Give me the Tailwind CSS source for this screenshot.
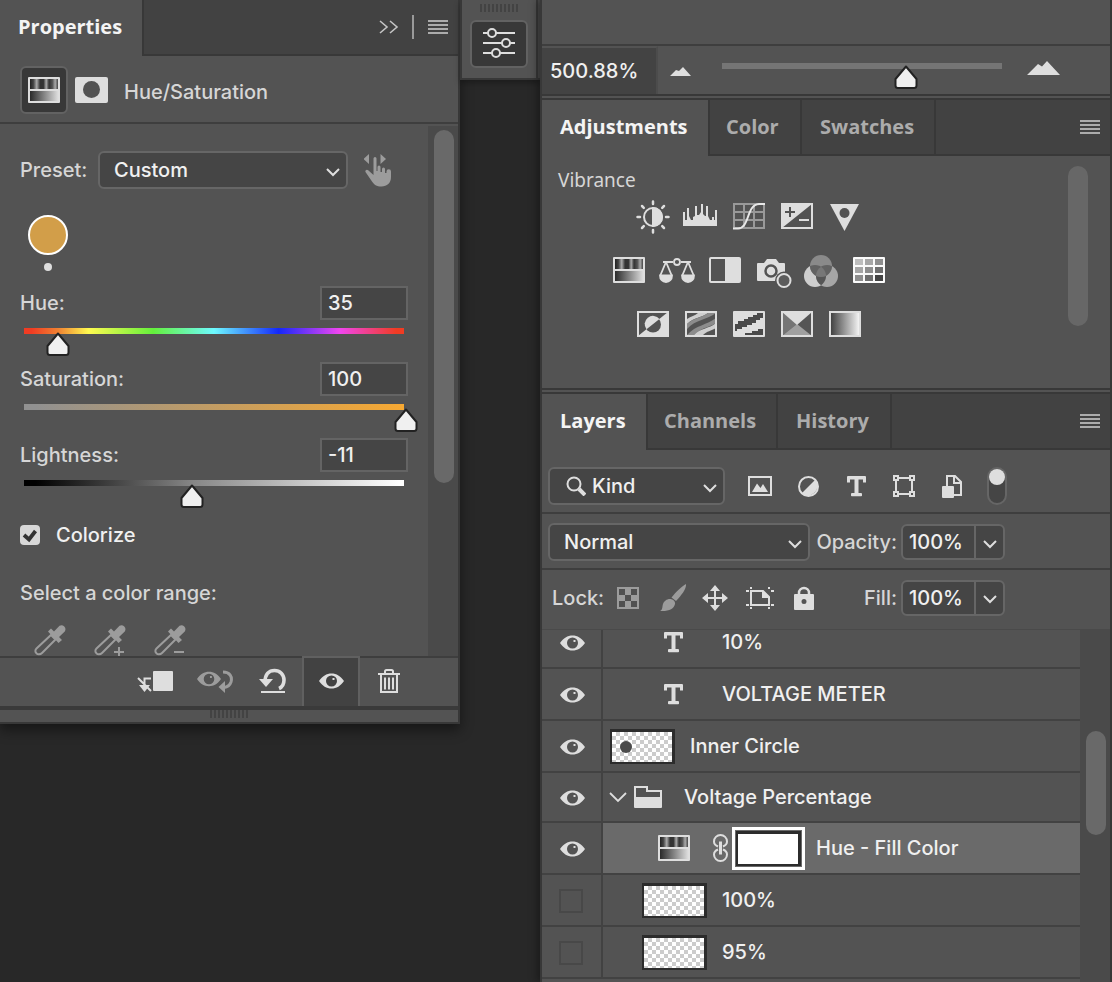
<!DOCTYPE html>
<html lang="en">
<head>
<meta charset="utf-8">
<meta name="viewport" content="width=device-width, initial-scale=1">
<title>Hue/Saturation properties</title>
<script src="https://cdn.jsdelivr.net/npm/@tailwindcss/browser@4"></script>
</head>
<body class="bg-[#282828] font-['Inter',sans-serif] text-xl leading-6 font-[450] text-[#d6d6d6]">

<!-- Shared icons -->
<svg class="absolute h-0 w-0" aria-hidden="true">
  <defs>
    <linearGradient id="bands">
      <stop offset="0" stop-color="#222"/><stop offset=".12" stop-color="#444"/><stop offset=".24" stop-color="#aaa"/><stop offset=".36" stop-color="#333"/><stop offset=".48" stop-color="#333"/><stop offset=".58" stop-color="#aaa"/><stop offset=".68" stop-color="#333"/><stop offset=".8" stop-color="#555"/><stop offset=".9" stop-color="#aaa"/><stop offset="1" stop-color="#444"/>
    </linearGradient>
    <linearGradient id="ramp"><stop offset="0" stop-color="#2b2b2b"/><stop offset="1" stop-color="#dcdcdc"/></linearGradient>
    <linearGradient id="mapRamp"><stop offset="0" stop-color="#3c3c3c"/><stop offset=".85" stop-color="#dcdcdc"/><stop offset="1" stop-color="#fafafa"/></linearGradient>
    <clipPath id="mixTop"><circle cx="20" cy="14" r="11"/></clipPath>
    <clipPath id="mixLeft"><circle cx="14" cy="24" r="11"/></clipPath>
  </defs>
  <symbol id="huesat" viewBox="0 0 32 26">
    <rect width="32" height="26" rx="1" fill="#dedede"/>
    <rect x="2" y="2" width="28" height="10" fill="url(#bands)"/>
    <rect x="2" y="14" width="28" height="10" fill="url(#ramp)"/>
  </symbol>
  <symbol id="eye" viewBox="0 0 25 16">
    <path fill="currentColor" fill-rule="evenodd" d="M0 8C3.500 3 7.500.5 12.500.5S21.500 3 25 8c-3.500 5-7.500 7.500-12.500 7.500S3.500 13 0 8zM12.500 2.500a5.500 5.500 0 1 0 0 11 5.500 5.500 0 0 0 0-11zM13.500 5h2v2h-2z"/>
  </symbol>
  <symbol id="chevron" viewBox="0 0 14 9"><path d="M1 1l6 6 6-6" fill="none" stroke="#dedede" stroke-width="2"/></symbol>
  <symbol id="menu" viewBox="0 0 20 14"><path d="M0 1h20M0 5h20M0 9h20M0 13h20" stroke="#acacac" stroke-width="2"/></symbol>
  <symbol id="thumb" viewBox="0 0 24 24"><path d="M12 1.500L22.500 14v6.500a2.500 2.500 0 0 1-2.500 2.500H4a2.500 2.500 0 0 1-2.500-2.500V14z" fill="#f0f0f0" stroke="#222" stroke-width="2" stroke-linejoin="round"/></symbol>
  <symbol id="type" viewBox="0 0 19 21"><path d="M1 0h17a1 1 0 0 1 1 1v5.500h-3V3.500h-4.500V17H14a1 1 0 0 1 1 1v1.500a.8.8 0 0 1-.8.8H4.800A.8.8 0 0 1 4 19.500V18a1 1 0 0 1 1-1h2.500V3.500H3v3H0V1a1 1 0 0 1 1-1z" fill="#dedede"/></symbol>
  <symbol id="dropper" viewBox="0 0 32 32">
    <path d="M17 11l4.500 4.500L8 29c-2 2-4.500 1.500-5.500.3C1 28 1 26 2.500 24.500z" fill="none" stroke="#9c9c9c" stroke-width="2"/>
    <path d="M14 7.500L17 4.500l3 3 5.500-5.700a4 4 0 0 1 5.300 5.600L25 13l3 3-3.500 3z" fill="#9c9c9c"/>
  </symbol>
  <symbol id="grip" viewBox="0 0 38 8"><path d="M0 4h38" stroke="#434343" stroke-width="8" stroke-dasharray="2 2"/></symbol>
</svg>

<div class="flex min-h-screen items-start">

  <!-- Properties panel -->
  <section class="w-[460px] shrink-0 border-r-2 border-b-2 border-[#383838] bg-[#535353] shadow-[0_6px_12px_rgba(0,0,0,0.45)]" aria-label="Properties">
    <header class="flex h-14">
      <h1 class="w-[142px] shrink-0 pt-[15px] pl-[18px] font-['Open_Sans',sans-serif] text-xl leading-6 font-bold text-[#f4f4f4]">Properties</h1>
      <div class="flex flex-1 items-center justify-end border-b-2 border-l-2 border-[#383838] bg-[#424242] pr-[10px]">
        <button type="button" aria-label="Collapse"><svg class="h-4 w-5" viewBox="0 0 20 16" fill="none" stroke="#c4c4c4" stroke-width="1.600"><path d="M1 2l7 6-7 6M11 2l7 6-7 6"/></svg></button>
        <span class="mr-[14px] ml-[13px] h-6 w-[2px] bg-[#9a9a9a]"></span>
        <button type="button" aria-label="Panel menu"><svg class="h-[14px] w-5"><use href="#menu"/></svg></button>
      </div>
    </header>

    <div class="flex h-[68px] items-center border-b-2 border-[#3e3e3e] pt-[2px] pl-5">
      <button type="button" aria-label="Adjustment" class="grid h-12 w-12 place-items-center rounded-md border-2 border-[#626262] bg-[#383838]"><svg class="h-[26px] w-8"><use href="#huesat"/></svg></button>
      <button type="button" aria-label="Mask" class="ml-[7px]"><svg class="h-[26px] w-[33px]" viewBox="0 0 33 26"><rect width="33" height="26" rx="2" fill="#dedede"/><circle cx="16.500" cy="12.500" r="8.500" fill="#535353"/></svg></button>
      <h2 class="pt-1 pl-4">Hue/Saturation</h2>
    </div>

    <div class="flex h-[532px] overflow-hidden">
      <form class="flex-1 pt-[27px] pr-5 pl-5">
        <div class="flex h-[38px] items-center">
          <label for="preset" class="w-[78px]">Preset:</label>
          <div class="relative w-[250px]">
            <select id="preset" class="block h-[38px] w-full appearance-none rounded-md border-2 border-[#666] bg-[#454545] pl-[14px] text-[#f0f0f0]"><option>Custom</option></select>
            <svg class="pointer-events-none absolute top-[17px] right-2 h-[9px] w-[14px]"><use href="#chevron"/></svg>
          </div>
          <button type="button" aria-label="On-image adjustment" class="ml-4"><svg class="h-[34px] w-7" viewBox="0 0 28 34" fill="#9c9c9c"><path d="M5 1v10L-.5 6zM16.500 1v10L22 6z"/><path d="M9.500 5.500a1.500 1.500 0 0 1 3 0V18h1v-4a1.400 1.400 0 0 1 3 0v5h1.500v-3a1.400 1.400 0 0 1 3 0v4h1.500v-1.500a1.500 1.500 0 0 1 4.500 0V24c0 6-4 9.500-9.500 9.500-5 0-7.500-2-9.500-5L1.500 19c-.8-2 1.500-3 2.700-1.800L9.500 22z"/></svg></button>
        </div>

        <div class="mt-[26px] ml-2 flex w-10 flex-col items-center gap-2">
          <button type="button" aria-label="Colorize color" class="h-10 w-10 rounded-full border-2 border-white bg-[#d29e49]"></button>
          <span class="h-2 w-2 rounded-full bg-[#dedede]"></span>
        </div>

        <div class="mt-[15px] flex flex-col gap-[6px]">
          <div>
            <div class="flex h-[34px] items-center justify-between"><label for="hue">Hue:</label><input id="hue" type="text" value="35" class="h-[34px] w-22 border-2 border-[#646464] bg-[#454545] px-[6px] text-[#f0f0f0]"></div>
            <div class="relative mx-1 h-9 pt-2">
              <div class="h-[6px] bg-[linear-gradient(90deg,#f03c23_2%,#f08232_9%,#fffa50_17%,#64f03c_34%,#6efaff_50%,#1428fa_67%,#f046f0_83%,#f03c23_98%)]"></div>
              <svg class="absolute top-3 h-6 w-6 -translate-x-1/2" style="left:8.900%"><use href="#thumb"/></svg>
              <input type="range" aria-label="Hue" min="0" max="360" value="35" class="absolute inset-0 h-full w-full opacity-0">
            </div>
          </div>
          <div>
            <div class="flex h-[34px] items-center justify-between"><label for="sat">Saturation:</label><input id="sat" type="text" value="100" class="h-[34px] w-22 border-2 border-[#646464] bg-[#454545] px-[6px] text-[#f0f0f0]"></div>
            <div class="relative mx-1 h-9 pt-2">
              <div class="h-[6px] bg-[linear-gradient(90deg,#919191_3%,#f8a932)]"></div>
              <svg class="absolute top-3 h-6 w-6 -translate-x-1/2" style="left:100.500%"><use href="#thumb"/></svg>
              <input type="range" aria-label="Saturation" min="0" max="100" value="100" class="absolute inset-0 h-full w-full opacity-0">
            </div>
          </div>
          <div>
            <div class="flex h-[34px] items-center justify-between"><label for="light">Lightness:</label><input id="light" type="text" value="-11" class="h-[34px] w-22 border-2 border-[#646464] bg-[#454545] px-[6px] text-[#f0f0f0]"></div>
            <div class="relative mx-1 h-9 pt-2">
              <div class="h-[6px] bg-[linear-gradient(90deg,#000_3%,#888_45%,#fff_99%)]"></div>
              <svg class="absolute top-3 h-6 w-6 -translate-x-1/2" style="left:44.200%"><use href="#thumb"/></svg>
              <input type="range" aria-label="Lightness" min="-100" max="100" value="-11" class="absolute inset-0 h-full w-full opacity-0">
            </div>
          </div>
        </div>

        <label class="mt-[15px] flex items-center gap-4 text-[#f0f0f0]">
          <span class="relative h-5 w-5">
            <input type="checkbox" checked class="block h-5 w-5 appearance-none rounded bg-[#d8d8d8]">
            <svg class="pointer-events-none absolute inset-0 h-5 w-5" viewBox="0 0 20 20" fill="none" stroke="#333" stroke-width="3.800"><path d="M4 10l5 4.500L15.500 6"/></svg>
          </span>
          Colorize
        </label>

        <p class="mt-[34px]">Select a color range:</p>
        <div class="mt-[19px] ml-[14px] flex gap-7">
          <button type="button" aria-label="Eyedropper"><svg class="h-8 w-8"><use href="#dropper"/></svg></button>
          <button type="button" aria-label="Add to sample"><svg class="h-8 w-8" viewBox="0 0 32 32"><use href="#dropper" width="32" height="32"/><path d="M20 28h10M25 23v10" stroke="#9c9c9c" stroke-width="2"/></svg></button>
          <button type="button" aria-label="Subtract from sample"><svg class="h-8 w-8" viewBox="0 0 32 32"><use href="#dropper" width="32" height="32"/><path d="M20 28h10" stroke="#9c9c9c" stroke-width="2"/></svg></button>
        </div>
      </form>
      <div class="mt-[2px] w-[30px] bg-[#4a4a4a] px-[4px] pt-1"><div class="ml-[2px] h-[353px] w-5 rounded-full bg-[#696969]"></div></div>
    </div>

    <footer class="flex h-[50px] justify-end border-t-2 border-[#3e3e3e] pr-10">
      <button type="button" aria-label="Clip to layer" class="grid w-[58px] place-items-center pr-1 pb-[2px]"><svg class="h-6 w-9" viewBox="0 0 36 24"><rect x="16" y="2" width="20" height="20" rx="1" fill="#dedede"/><path d="M14 9.500H7.500V18M1 9l13 13" fill="none" stroke="#dedede" stroke-width="2"/><path d="M2 16h11l-5.500 7z" fill="#dedede"/></svg></button>
      <button type="button" aria-label="View previous state" class="grid w-[58px] place-items-center text-[#9c9c9c]"><svg class="h-6 w-9" viewBox="0 0 36 24"><use href="#eye" width="24" height="16" y="1"/><path d="M26 2c7 0 9.500 5 8 10-1 3-3.500 5-7 5.500" fill="none" stroke="#9c9c9c" stroke-width="3"/><path d="M28 11v12l-6.500-6z" fill="#9c9c9c"/></svg></button>
      <button type="button" aria-label="Reset" class="grid w-[58px] place-items-center pb-[2px]"><svg class="h-[26px] w-7" viewBox="0 0 28 26"><path d="M6 14C6 6 10 2.500 15.500 2.500S25 6.500 25 12c0 4-1.500 7-5 8.500" fill="none" stroke="#dedede" stroke-width="3.600"/><path d="M0 11h14l-7 8z" fill="#dedede"/><path d="M2 24h24" stroke="#dedede" stroke-width="2"/></svg></button>
      <button type="button" aria-label="Toggle visibility" class="-mt-[2px] grid w-[58px] place-items-center border-x-2 border-t-2 border-[#606060] bg-[#424242] pb-[2px] text-[#dedede]"><svg class="h-4 w-[25px]"><use href="#eye"/></svg></button>
      <button type="button" aria-label="Delete" class="grid w-[58px] place-items-center pb-[2px]"><svg class="h-[26px] w-[22px]" viewBox="0 0 22 26" fill="none" stroke="#dedede" stroke-width="2"><path d="M0 6h22M3 6v18h16V6M7 5V3.500C7 2.500 7.500 2 8.500 2h5c1 0 1.500.5 1.500 1.500V5M7 9.500v12M11 9.500v12M15 9.500v12"/></svg></button>
    </footer>
    <div class="flex h-4 justify-center border-t-4 border-[#3a3a3a]"><svg class="h-2 w-[38px]"><use href="#grip"/></svg></div>
  </section>

  <!-- Collapsed dock -->
  <aside class="w-20 shrink-0">
    <div class="flex h-20 border-b-2 border-[#383838] shadow-[0_3px_6px_rgba(0,0,0,0.3)]">
      <div class="flex flex-1 flex-col items-center border-r-2 border-l-2 border-[#383838] bg-[#535353] pt-1">
        <svg class="h-2 w-[38px]"><use href="#grip"/></svg>
        <button type="button" aria-label="Properties" class="mt-2 grid h-12 w-[58px] place-items-center rounded-md border-2 border-[#626262] bg-[#383838] pb-[2px]"><svg class="h-[30px] w-8" viewBox="0 0 32 30" fill="#383838" stroke="#dedede" stroke-width="2"><path d="M0 5h32M0 15h32M0 25h32"/><circle cx="9" cy="5" r="4"/><circle cx="23" cy="15" r="4"/><circle cx="13" cy="25" r="4"/></svg></button>
      </div>
      <div class="w-[2px] bg-[#4a4a4a]"></div>
    </div>
  </aside>

  <!-- Right column -->
  <main class="flex h-screen min-w-0 flex-1 flex-col overflow-hidden border-x-2 border-[#383838] bg-[#535353] shadow-[-3px_0_8px_rgba(0,0,0,0.35)]">

    <section aria-label="Navigator" class="shrink-0 border-b-2 border-[#383838]">
      <div class="h-[46px] border-b-2 border-[#3e3e3e]"></div>
      <div class="flex h-12">
        <input type="text" aria-label="Zoom" value="500.88%" class="w-[116px] border-t-2 border-r-2 border-t-[#535353] border-r-[#4c4c4c] bg-[#434343] pl-2 text-[#f0f0f0]">
        <div class="flex flex-1 pt-[15px]">
          <svg class="mt-[6px] ml-3 h-[9px] w-[21px]" viewBox="0 0 21 9"><path d="M0 9L6 3l3 1 4-4 8 9z" fill="#dedede"/></svg>
          <div class="relative ml-[31px] h-7 w-[280px] pt-[2px]">
            <div class="h-[6px] bg-[#757575]"></div>
            <svg class="absolute top-1 h-6 w-6 -translate-x-1/2" style="left:65.700%"><use href="#thumb"/></svg>
            <input type="range" aria-label="Zoom level" min="0" max="100" value="66" class="absolute inset-0 h-full w-full opacity-0">
          </div>
          <svg class="ml-[25px] h-[14px] w-[33px]" viewBox="0 0 33 14"><path d="M0 14L11 3l4 2.500L20 0l13 14z" fill="#dedede"/></svg>
        </div>
      </div>
    </section>

    <section aria-label="Adjustments" class="mt-[2px] shrink-0 border-y-2 border-[#383838]">
      <div role="tablist" class="flex h-14 font-['Open_Sans',sans-serif] font-bold text-[#acacac]">
        <button type="button" role="tab" aria-selected="true" class="w-[166px] pb-[2px] pl-[18px] text-left text-[#f4f4f4]">Adjustments</button>
        <button type="button" role="tab" class="w-[92px] border-b-2 border-l-2 border-[#383838] bg-[#424242] pl-4 text-left">Color</button>
        <button type="button" role="tab" class="w-[134px] border-b-2 border-l-2 border-[#383838] bg-[#424242] pl-[18px] text-left">Swatches</button>
        <div class="flex flex-1 items-center justify-end border-b-2 border-l-2 border-[#383838] bg-[#424242] pr-[10px]"><button type="button" aria-label="Panel menu"><svg class="h-[14px] w-5"><use href="#menu"/></svg></button></div>
      </div>
      <div class="flex h-[232px] justify-between pr-[22px]">
        <div>
          <h2 class="mt-3 ml-4 font-['Noto_Sans',sans-serif] text-[19px] leading-6">Vibrance</h2>
          <div class="mt-[6px] ml-[67px] flex w-fit flex-col items-center gap-[18px]">
            <div class="flex gap-2">
              <button type="button" aria-label="Brightness/Contrast"><svg class="block h-9 w-10" viewBox="0 0 40 36" fill="none" stroke="#dedede" stroke-width="2"><circle cx="20" cy="19" r="9"/><path d="M20 10a9 9 0 0 1 0 18z" fill="#dedede"/><path stroke-width="2.500" stroke-linecap="round" d="M20 3.500v2.500M20 32v2.500M4.500 19H7M33 19h2.500M9 8l1.800 1.800M29.200 28.200L31 30M31 8l-1.800 1.800M9 30l1.800-1.800"/></svg></button>
              <button type="button" aria-label="Levels"><svg class="block h-9 w-10" viewBox="0 0 40 36" fill="#dedede"><path d="M2 28V14h2v8h2V10h2v8l2 4h2v-3l2-1V8h2v9h2l2-3V6h2v10l2 2h1V8h2v10l2 4h2v-3h2v3h1V12h2v16z"/></svg></button>
              <button type="button" aria-label="Curves"><svg class="block h-9 w-10" viewBox="0 0 40 36" fill="none"><path d="M5 6h30v24H5zM15 6v24M25 6v24M5 14h30M5 22h30" stroke="#999" stroke-width="2"/><path d="M4 30.500h5C21 30 17 7 30 6h6" stroke="#e8e8e8" stroke-width="2"/></svg></button>
              <button type="button" aria-label="Exposure"><svg class="block h-9 w-10" viewBox="0 0 40 36"><rect x="5" y="6" width="30" height="24" fill="none" stroke="#dedede" stroke-width="2"/><path d="M5 6h30L5 30z" fill="#dedede"/><path d="M8 14h10M13 9v10" stroke="#535353" stroke-width="2"/><path d="M22 22h10" stroke="#dedede" stroke-width="2"/></svg></button>
              <button type="button" aria-label="Vibrance"><svg class="block h-9 w-10" viewBox="0 0 40 36"><path d="M5 6h29L19.500 33z" fill="#dedede"/><circle cx="19.500" cy="15" r="5" fill="#535353"/></svg></button>
            </div>
            <div class="flex gap-2">
              <button type="button" aria-label="Hue/Saturation"><svg class="block h-9 w-10" viewBox="0 0 40 36"><use href="#huesat" x="4" y="5" width="32" height="26"/></svg></button>
              <button type="button" aria-label="Color Balance"><svg class="block h-9 w-10" viewBox="0 0 40 36" fill="none" stroke="#dedede" stroke-width="1.800"><path d="M6 10h10M24 10h10M9 10L3.500 23M9 10l5.500 13M31 10l-5.500 13M31 10l5.500 13"/><circle cx="20" cy="10" r="3"/><path d="M3 23.500h12c0 4-2.500 6.500-6 6.500s-6-2.500-6-6.500zM25 23.500h12c0 4-2.500 6.500-6 6.500s-6-2.500-6-6.500z" fill="#dedede"/></svg></button>
              <button type="button" aria-label="Black &amp; White"><svg class="block h-9 w-10" viewBox="0 0 40 36"><rect x="5" y="6" width="30" height="24" rx="1" fill="none" stroke="#dedede" stroke-width="2"/><path d="M20 6h15v24H20z" fill="#dedede"/></svg></button>
              <button type="button" aria-label="Photo Filter"><svg class="block h-9 w-10" viewBox="0 0 40 36"><path d="M5 11h6l3-4h9l3 4h5a1 1 0 0 1 1 1v16a1 1 0 0 1-1 1H5a1 1 0 0 1-1-1V12a1 1 0 0 1 1-1z" fill="#dedede"/><circle cx="18" cy="19" r="5.500" fill="#dedede" stroke="#535353" stroke-width="2.500"/><circle cx="31" cy="28.500" r="9" fill="#535353"/><circle cx="31" cy="28.500" r="6.500" fill="#5c5c5c" stroke="#dedede" stroke-width="2"/></svg></button>
              <button type="button" aria-label="Channel Mixer"><svg class="block h-9 w-10" viewBox="0 0 40 36"><circle cx="14" cy="24" r="11" fill="#cecece"/><circle cx="26" cy="24" r="11" fill="#a6a6a6"/><circle cx="20" cy="14" r="11" fill="#8a8a8a"/><g clip-path="url(#mixLeft)"><circle cx="26" cy="24" r="11" fill="#555"/><circle cx="20" cy="14" r="11" fill="#626262"/></g><g clip-path="url(#mixTop)"><circle cx="26" cy="24" r="11" fill="#626262"/><g clip-path="url(#mixLeft)"><circle cx="26" cy="24" r="11" fill="#777"/></g></g></svg></button>
              <button type="button" aria-label="Color Lookup"><svg class="block h-9 w-10" viewBox="0 0 40 36"><rect x="4" y="5" width="32" height="26" rx="1" fill="#fafafa"/><path d="M6 7h8v6H6z" fill="#bdbdbd"/><path d="M16 7h8v6h-8zM6 15h8v6H6z" fill="#a6a6a6"/><path d="M26 7h8v6h-8zM16 15h8v6h-8zM6 23h8v6H6z" fill="#8e8e8e"/><path d="M26 15h8v6h-8zM16 23h8v6h-8z" fill="#6e6e6e"/><path d="M26 23h8v6h-8z" fill="#444"/></svg></button>
            </div>
            <div class="flex gap-2">
              <button type="button" aria-label="Invert"><svg class="block h-9 w-10" viewBox="0 0 40 36"><rect x="5" y="6" width="30" height="24" fill="none" stroke="#dedede" stroke-width="2"/><path d="M35 6v24H5z" fill="#dedede"/><circle cx="20" cy="18.500" r="8" fill="#535353"/><path d="M13.500 23.300A8 8 0 0 1 26.500 13z" fill="#dedede"/></svg></button>
              <button type="button" aria-label="Posterize"><svg class="block h-9 w-10" viewBox="0 0 40 36"><rect x="5" y="6" width="30" height="24" fill="#535353"/><path d="M17 7h10c-6 5-14 4-21 11v-5c4-3 8-3 11-6z" fill="#cfcfcf"/><path d="M27 7h8C26 14 15 13 6 23v-5C14 11 21 12 27 7z" fill="#8c8c8c"/><path d="M35 12v5C27 22 19 22 13 29H6c9-10 20-10 29-17z" fill="#8c8c8c"/><path d="M35 17v5c-5 3-9 3-13 7h-9c6-7 15-6 22-12z" fill="#cfcfcf"/><rect x="5" y="6" width="30" height="24" fill="none" stroke="#dedede" stroke-width="2"/></svg></button>
              <button type="button" aria-label="Threshold"><svg class="block h-9 w-10" viewBox="0 0 40 36"><rect x="4" y="5" width="32" height="26" rx="1" fill="#dedede"/><path d="M34 7h-6v2h-4v2h-5v2h-4v2H9v3H6v7h2v-2h5v-2h5v-2h5v-2h4v-3h4v-2h3zM34 23h-5v2h-6v2h-7v2h18z" fill="#4a4a4a"/></svg></button>
              <button type="button" aria-label="Selective Color"><svg class="block h-9 w-10" viewBox="0 0 40 36"><rect x="5" y="6" width="30" height="24" fill="#555"/><path d="M5 6l15 12L5 30z" fill="#757575"/><path d="M5 30l15-12 15 12z" fill="#a0a0a0"/><path d="M5 6h30L20 19z" fill="#dedede"/><rect x="5" y="6" width="30" height="24" fill="none" stroke="#dedede" stroke-width="2"/></svg></button>
              <button type="button" aria-label="Gradient Map"><svg class="block h-9 w-10" viewBox="0 0 40 36"><rect x="5" y="6" width="30" height="24" fill="url(#mapRamp)" stroke="#dedede" stroke-width="2"/></svg></button>
            </div>
          </div>
        </div>
        <div class="mt-[10px] h-40 w-5 rounded-full bg-[#676767]"></div>
      </div>
    </section>

    <section aria-label="Layers" class="mt-[2px] flex min-h-0 flex-1 flex-col border-t-2 border-[#383838]">
      <div role="tablist" class="flex h-14 shrink-0 font-['Open_Sans',sans-serif] font-bold text-[#acacac]">
        <button type="button" role="tab" aria-selected="true" class="w-[104px] pb-[2px] pl-[18px] text-left text-[#f4f4f4]">Layers</button>
        <button type="button" role="tab" class="w-[130px] border-b-2 border-l-2 border-[#383838] bg-[#424242] pl-4 text-left">Channels</button>
        <button type="button" role="tab" class="w-[114px] border-b-2 border-l-2 border-[#383838] bg-[#424242] pl-[18px] text-left">History</button>
        <div class="flex flex-1 items-center justify-end border-b-2 border-l-2 border-[#383838] bg-[#424242] pr-[10px]"><button type="button" aria-label="Panel menu"><svg class="h-[14px] w-5"><use href="#menu"/></svg></button></div>
      </div>

      <div class="flex h-16 shrink-0 items-center border-b-2 border-[#3e3e3e] pt-[10px] pl-[6px]">
        <div class="relative w-[177px]">
          <svg class="pointer-events-none absolute top-[9px] left-[18px] h-5 w-5" viewBox="0 0 20 20" fill="none" stroke="#dedede"><circle cx="8" cy="8" r="6.500" stroke-width="2"/><path d="M13 13l6 6" stroke-width="4"/></svg>
          <select aria-label="Filter type" class="block h-[38px] w-full appearance-none rounded-md border-2 border-[#666] bg-[#454545] pl-[42px] text-[#f0f0f0]"><option>Kind</option></select>
          <svg class="pointer-events-none absolute top-[17px] right-2 h-[9px] w-[14px]"><use href="#chevron"/></svg>
        </div>
        <div class="ml-[11px] flex">
          <button type="button" aria-label="Pixel layers" class="grid w-12 place-items-center"><svg class="h-5 w-6" viewBox="0 0 24 20"><rect x="1" y="1" width="22" height="18" fill="none" stroke="#dedede" stroke-width="2"/><path d="M4 16l5-8.500 3.500 4.500L15 8l5 8z" fill="#dedede"/></svg></button>
          <button type="button" aria-label="Adjustment layers" class="grid w-12 place-items-center"><svg class="h-[21px] w-[21px]" viewBox="0 0 21 21"><circle cx="10.500" cy="10.500" r="9.500" fill="none" stroke="#dedede" stroke-width="2"/><path d="M17.500 3.500a10 10 0 0 1-14 14z" fill="#dedede"/></svg></button>
          <button type="button" aria-label="Type layers" class="grid w-12 place-items-center"><svg class="h-[21px] w-[19px]"><use href="#type"/></svg></button>
          <button type="button" aria-label="Shape layers" class="grid w-12 place-items-center"><svg class="h-[22px] w-[22px]" viewBox="0 0 22 22" fill="none" stroke="#dedede" stroke-width="2"><path d="M3 6v10M19 6v10M6 3h10M6 19h10"/><path d="M1 1h4v4H1zM17 1h4v4h-4zM1 17h4v4H1zM17 17h4v4h-4z"/></svg></button>
          <button type="button" aria-label="Smart objects" class="grid w-12 place-items-center"><svg class="h-[23px] w-5" viewBox="0 0 20 23"><path d="M5 11V1h8l6 6v13h-8M12 1v7h7" fill="none" stroke="#dedede" stroke-width="2"/><rect y="11" width="12" height="12" rx="1" fill="#dedede"/></svg></button>
        </div>
        <button type="button" aria-label="Toggle filtering" class="ml-[11px] flex h-[38px] w-5 items-start rounded-full border-2 border-[#666] bg-[#454545]"><span class="block h-4 w-4 rounded-full bg-[#dedede]"></span></button>
      </div>

      <div class="flex h-14 shrink-0 items-center border-b-2 border-[#3e3e3e] pt-[2px] pl-[6px]">
        <div class="relative w-[262px]">
          <select aria-label="Blend mode" class="block h-[38px] w-full appearance-none rounded-md border-2 border-[#666] bg-[#454545] pl-[14px] text-[#f0f0f0]"><option>Normal</option></select>
          <svg class="pointer-events-none absolute top-[17px] right-2 h-[9px] w-[14px]"><use href="#chevron"/></svg>
        </div>
        <label for="opacity" class="w-[91px] pr-1 text-right">Opacity:</label>
        <div class="flex h-9 w-[104px] rounded-md border-2 border-[#666] bg-[#454545]">
          <input id="opacity" type="text" value="100%" class="w-[73px] border-r-2 border-[#666] pl-[6px] text-[#f0f0f0]">
          <button type="button" aria-label="Opacity slider" class="grid flex-1 place-items-center pt-1"><svg class="h-[9px] w-[14px]"><use href="#chevron"/></svg></button>
        </div>
      </div>

      <div class="flex h-15 shrink-0 items-center border-b border-[#4a4a4a] pb-1 pl-[10px]">
        <span class="w-[65px]">Lock:</span>
        <div class="flex items-center">
          <button type="button" aria-label="Lock transparent pixels"><svg class="h-[22px] w-[22px]" viewBox="0 0 22 22"><rect width="22" height="22" fill="#9c9c9c"/><path d="M2 2h6v6H2zM14 2h6v6h-6zM8 8h6v6H8zM2 14h6v6H2zM14 14h6v6h-6z" fill="#505050"/></svg></button>
          <button type="button" aria-label="Lock image pixels" class="ml-[21px]"><svg class="h-7 w-[26px]" viewBox="0 0 26 28" fill="#9c9c9c"><path d="M26 0c.5 4-3 10-10 17l-4.500-3.500C16 8 22 2 26 0zM10.500 15c3 .5 5 2.500 4.500 5-1 5-6 7.500-15 7 3-1.500 2-4 3-7s4-5.300 7.500-5z"/></svg></button>
          <button type="button" aria-label="Lock position" class="ml-4"><svg class="h-[26px] w-[26px]" viewBox="0 0 26 26"><path d="M13 4v18M4 13h18" stroke="#dedede" stroke-width="2"/><path d="M13 0l5 6H8zM13 26l5-6H8zM0 13l6-5v10zM26 13l-6-5v10z" fill="#dedede"/></svg></button>
          <button type="button" aria-label="Lock artboard nesting" class="ml-[18px]"><svg class="h-6 w-7" viewBox="0 0 28 24" fill="none" stroke="#dedede" stroke-width="2"><path d="M5 5h12l6 6v8H5zM0 5h3M25 5h3M0 19h3M25 19h3M5 1v2M23 1v2M5 21v2M23 21v2"/><path d="M16 4l8 8h-8z" fill="#dedede" stroke="none"/></svg></button>
          <button type="button" aria-label="Lock all" class="ml-5"><svg class="h-6 w-5" viewBox="0 0 20 24"><path d="M5 10V7a5 5 0 0 1 10 0v3" fill="none" stroke="#dedede" stroke-width="2.500"/><path fill-rule="evenodd" d="M1 8h18a1 1 0 0 1 1 1v14a1 1 0 0 1-1 1H1a1 1 0 0 1-1-1V9a1 1 0 0 1 1-1zm9 5a2.500 2.500 0 1 0 0 5 2.500 2.500 0 0 0 0-5z" fill="#dedede"/></svg></button>
        </div>
        <label for="fill" class="w-[87px] pr-1 text-right">Fill:</label>
        <div class="flex h-9 w-[104px] rounded-md border-2 border-[#666] bg-[#454545]">
          <input id="fill" type="text" value="100%" class="w-[73px] border-r-2 border-[#666] pl-[6px] text-[#f0f0f0]">
          <button type="button" aria-label="Fill slider" class="grid flex-1 place-items-center pt-1"><svg class="h-[9px] w-[14px]"><use href="#chevron"/></svg></button>
        </div>
      </div>

      <div class="flex min-h-0 flex-1 overflow-hidden">
        <ul class="flex-1 text-[#f0f0f0]">
          <li class="flex h-[39px] border-b-2 border-[#424242]">
            <button type="button" aria-label="Hide layer" class="grid w-[61px] place-items-center border-r-2 border-[#424242] pb-3 pl-[2px] text-[#dedede]"><svg class="h-4 w-[25px]"><use href="#eye"/></svg></button>
            <div class="flex flex-1 items-center pb-[13px] pl-[61px]"><svg class="h-[21px] w-[19px]"><use href="#type"/></svg><span class="ml-[39px]">10%</span></div>
          </li>
          <li class="flex h-13 border-b-2 border-[#424242]">
            <button type="button" aria-label="Hide layer" class="grid w-[61px] place-items-center border-r-2 border-[#424242] pt-[2px] pl-[2px] text-[#dedede]"><svg class="h-4 w-[25px]"><use href="#eye"/></svg></button>
            <div class="flex flex-1 items-center pl-[61px]"><svg class="h-[21px] w-[19px]"><use href="#type"/></svg><span class="ml-[39px]">VOLTAGE METER</span></div>
          </li>
          <li class="flex h-13 border-b-2 border-[#424242]">
            <button type="button" aria-label="Hide layer" class="grid w-[61px] place-items-center border-r-2 border-[#424242] pt-[2px] pl-[2px] text-[#dedede]"><svg class="h-4 w-[25px]"><use href="#eye"/></svg></button>
            <div class="flex flex-1 items-center pl-[7px]"><span class="flex h-[35px] w-[65px] items-center border-2 border-t-3 border-r-3 border-[#2c2c2c] bg-[conic-gradient(#ccc_25%,#fff_0_50%,#ccc_0_75%,#fff_0)] bg-[length:8px_8px] pl-2"><span class="h-3 w-3 rounded-full bg-[#4c4c4c]"></span></span><span class="ml-[15px]">Inner Circle</span></div>
          </li>
          <li class="flex h-[50px] border-b-2 border-[#424242]">
            <button type="button" aria-label="Hide group" class="grid w-[61px] place-items-center border-r-2 border-[#424242] pt-[2px] pl-[2px] text-[#dedede]"><svg class="h-4 w-[25px]"><use href="#eye"/></svg></button>
            <div class="flex flex-1 items-center pl-[6px]"><button type="button" aria-label="Collapse group"><svg class="block h-[11px] w-[18px]" viewBox="0 0 18 11"><path d="M1 1l8 8 8-8" fill="none" stroke="#dedede" stroke-width="1.800"/></svg></button><svg class="ml-[7px] h-[22px] w-7" viewBox="0 0 28 22"><path d="M1 12V1h12v4h14v7" fill="none" stroke="#dedede" stroke-width="2"/><path d="M0 11h28v10a1 1 0 0 1-1 1H1a1 1 0 0 1-1-1z" fill="#dedede"/></svg><span class="ml-[22px]">Voltage Percentage</span></div>
          </li>
          <li class="flex h-13 border-b-2 border-[#424242]">
            <button type="button" aria-label="Hide layer" class="grid w-[61px] place-items-center border-r-2 border-[#424242] pt-[2px] pl-[2px] text-[#dedede]"><svg class="h-4 w-[25px]"><use href="#eye"/></svg></button>
            <div class="flex flex-1 items-center bg-[#6a6a6a] pl-[55px]"><svg class="h-[26px] w-8"><use href="#huesat"/></svg>
              <svg class="ml-[23px] h-7 w-[15px]" viewBox="0 0 15 28" fill="none" stroke="#dedede" stroke-width="2"><path d="M5 12.500C2.500 11.500 1 9.500 1 7.500a6.500 6.500 0 0 1 13 0c0 2-1.500 4-4 5M5 15.500c-2.500 1-4 3-4 5a6.500 6.500 0 0 0 13 0c0-2-1.500-4-4-5"/><path d="M7.500 7.500v13" stroke-width="3"/></svg>
              <span class="ml-1 flex h-[43px] w-[73px] border-3 border-white p-px"><span class="flex-1 border-2 border-t-3 border-r-3 border-[#2c2c2c] bg-white"></span></span>
              <span class="ml-[11px]">Hue - Fill Color</span></div>
          </li>
          <li class="flex h-13 border-b-2 border-[#424242]">
            <button type="button" aria-label="Show layer" class="grid w-[61px] place-items-center border-r-2 border-[#424242] pt-[2px] pr-[2px]"><span class="h-6 w-6 border-2 border-[#484848]"></span></button>
            <div class="flex flex-1 items-center pl-[39px]"><span class="h-[35px] w-[65px] border-2 border-t-3 border-r-3 border-[#2c2c2c] bg-[conic-gradient(#ccc_25%,#fff_0_50%,#ccc_0_75%,#fff_0)] bg-[length:8px_8px]"></span><span class="ml-[15px]">100%</span></div>
          </li>
          <li class="flex h-13 border-b-2 border-[#424242]">
            <button type="button" aria-label="Show layer" class="grid w-[61px] place-items-center border-r-2 border-[#424242] pt-[2px] pr-[2px]"><span class="h-6 w-6 border-2 border-[#484848]"></span></button>
            <div class="flex flex-1 items-center pl-[39px]"><span class="h-[35px] w-[65px] border-2 border-t-3 border-r-3 border-[#2c2c2c] bg-[conic-gradient(#ccc_25%,#fff_0_50%,#ccc_0_75%,#fff_0)] bg-[length:8px_8px]"></span><span class="ml-[15px]">95%</span></div>
          </li>
        </ul>
        <div class="w-[30px] bg-[#4a4a4a] pt-[101px] pl-[6px]"><div class="h-[104px] w-5 rounded-full bg-[#696969]"></div></div>
      </div>
    </section>
  </main>
</div>
</body>
</html>
